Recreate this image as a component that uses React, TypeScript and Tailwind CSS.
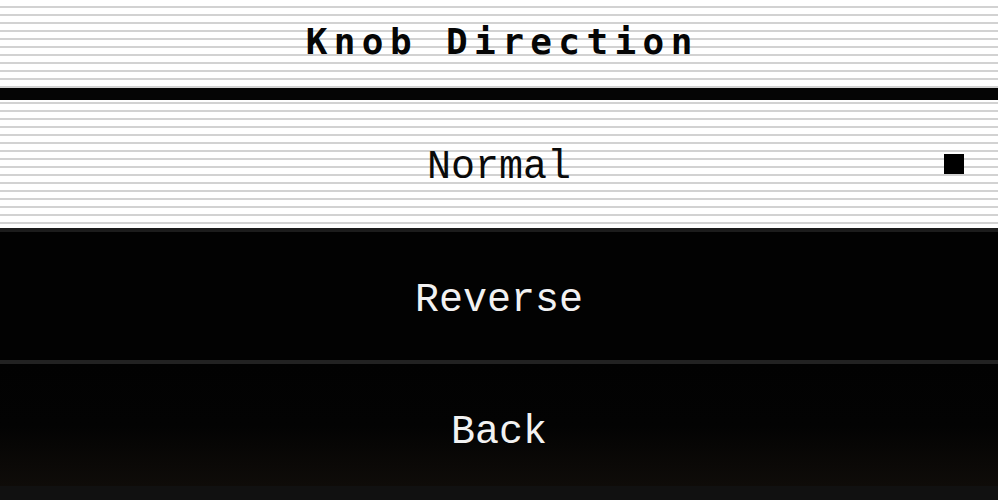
import React from "react";

const mono = { fontFamily: '"Liberation Mono", "DejaVu Sans Mono", monospace' };
const headFont = { fontFamily: '"DejaVu Sans Mono", "Liberation Mono", monospace' };

export default function App() {
  return (
    <div className="w-[998px] h-[500px] overflow-hidden bg-black flex flex-col" style={mono}>
      {/* Header */}
      <div className="h-[88px] shrink-0 flex items-center justify-center pb-[4px] bg-white bg-[repeating-linear-gradient(to_bottom,transparent_0px,transparent_6px,#d2d2d2_6px,#d2d2d2_8px)]">
        <h1 className="text-[36px] font-bold tracking-[6.4px] pl-[6.4px] text-[#050505] leading-none" style={headFont}>
          Knob Direction
        </h1>
      </div>
      <div className="h-[12px] shrink-0 bg-[#050505]" />

      {/* Selected: Normal */}
      <div className="h-[128px] shrink-0 relative flex items-center justify-center pt-[8px] bg-white bg-[repeating-linear-gradient(to_bottom,transparent_0px,transparent_2px,#d2d2d2_2px,#d2d2d2_4px,transparent_4px,transparent_8px)]">
        <span className="text-[40px] leading-none text-[#0a0a0a]">Normal</span>
        <span className="absolute right-[34px] top-[54px] w-[20px] h-[20px] bg-black" />
      </div>
      <div className="h-[4px] shrink-0 bg-[#1c1c1c]" />

      {/* Reverse */}
      <div className="h-[128px] shrink-0 flex items-center justify-center pt-[10px] bg-[#020202]">
        <span className="text-[40px] leading-none text-[#f2f2f2]">Reverse</span>
      </div>
      <div className="h-[4px] shrink-0 bg-[#222222]" />

      {/* Back */}
      <div className="flex-1 flex items-start justify-center pt-[49px] bg-[linear-gradient(to_bottom,#020202_0%,#030303_45%,#0f0c09_90%,#111111_90%,#111111_100%)]">
        <span className="text-[40px] leading-none text-[#f2f2f2]">Back</span>
      </div>
    </div>
  );
}
